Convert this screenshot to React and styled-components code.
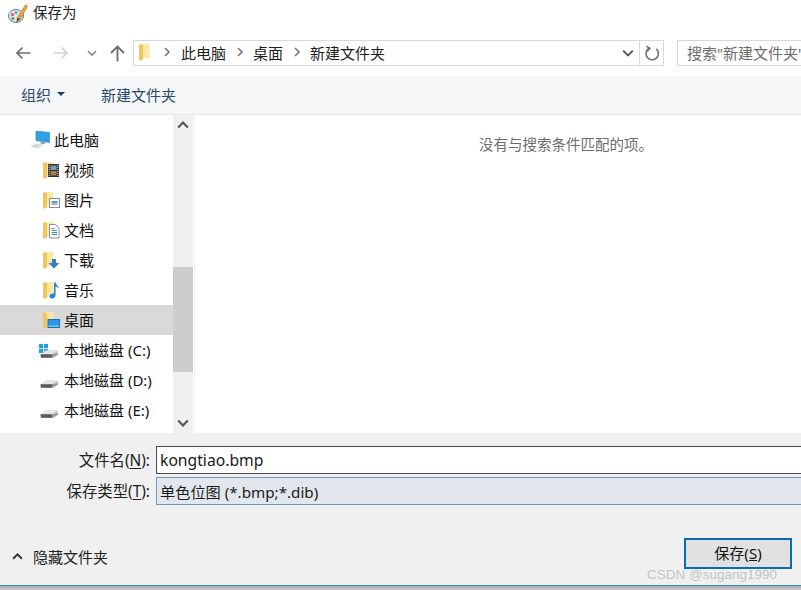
import React from "react";
import styled, { createGlobalStyle } from "styled-components";

const GlobalStyle = createGlobalStyle`
  html, body {
    margin: 0;
    padding: 0;
    background: #fff;
  }
  body {
    font-family: "Noto Sans", "Open Sans", "Noto Sans CJK SC", sans-serif;
  }
`;

const Chevron = ({ dir = "down", size = 10, color = "#555", width = 1.6 }) => {
  const points = {
    down: "1,3 5,7 9,3",
    up: "1,7 5,3 9,7",
    right: "3,1 7,5 3,9",
  };
  return (
    <svg width={size} height={size} viewBox="0 0 10 10">
      <polyline points={points[dir]} fill="none" stroke={color} strokeWidth={width} />
    </svg>
  );
};

const ArrowLeft = ({ color }) => (
  <svg width="16" height="14" viewBox="0 0 16 14">
    <path d="M15.5 7H2M7.5 1.5L2 7l5.5 5.5" fill="none" stroke={color} strokeWidth="1.7" />
  </svg>
);

const ArrowRight = ({ color }) => (
  <svg width="16" height="14" viewBox="0 0 16 14">
    <path d="M.5 7H14M8.5 1.5L14 7l-5.5 5.5" fill="none" stroke={color} strokeWidth="1.7" />
  </svg>
);

const ArrowUp = () => (
  <svg width="15" height="17" viewBox="0 0 15 17">
    <path d="M7.5 16.5V2M1 8l6.5-6.5L14 8" fill="none" stroke="#6b6b6b" strokeWidth="1.8" />
  </svg>
);

const RefreshIcon = () => (
  <svg width="16" height="17" viewBox="0 0 16 17">
    <path d="M5 3.2A6.2 6.2 0 1 0 11.5 3.4" fill="none" stroke="#6f6f6f" strokeWidth="1.6" transform="rotate(8 8 9)" />
    <path d="M2.4 1.2L5.8 3.4 3.2 6.4" fill="none" stroke="#6f6f6f" strokeWidth="1.5" />
  </svg>
);

const PaintIcon = () => (
  <svg width="20" height="20" viewBox="0 0 20 20">
    <ellipse cx="8" cy="12" rx="7.5" ry="6.5" fill="#dfe7ee" stroke="#5f7f9c" strokeWidth="1" />
    <circle cx="4.5" cy="10.5" r="1.5" fill="#d9534f" />
    <circle cx="8" cy="8.6" r="1.4" fill="#4b9bd6" />
    <circle cx="4.8" cy="14.4" r="1.5" fill="#5a9f4a" />
    <path d="M9 14L17.5 .8 19.6 2.2 12.5 15z" fill="#e8a93c" stroke="#a9701f" strokeWidth=".6" />
    <path d="M9 14l3.5 1-4 3.5z" fill="#6d4a20" />
  </svg>
);

const Folder = ({ children }) => (
  <svg width="18" height="18" viewBox="0 0 18 18">
    <path d="M3 1h8.5v14H3z" fill="#fde7a6" />
    <path d="M1 1.2l4 .8v15l-4 .6z" fill="#f3c460" />
    {children}
  </svg>
);

const folderBadges = {
  video: (
    <g>
      <rect x="6" y="3" width="11" height="13" fill="#333" />
      <rect x="8.5" y="4.5" width="6" height="4.5" fill="#7f9ab0" />
      <rect x="8.5" y="10" width="6" height="4.5" fill="#a8803f" />
      <path d="M7.2 4v11M15.8 4v11" stroke="#ddd" strokeWidth="1" strokeDasharray="1 1" />
    </g>
  ),
  picture: (
    <g>
      <rect x="7.5" y="7.5" width="10" height="9" fill="#fff" stroke="#848c94" />
      <rect x="9.5" y="10" width="6" height="2.5" fill="#5a93c4" />
      <rect x="9.5" y="13" width="6" height="1" fill="#9aa5ae" />
    </g>
  ),
  doc: (
    <g>
      <path d="M7.5 3.5h6l3.5 3.5v10h-9.5z" fill="#fff" stroke="#8b9299" />
      <path d="M9.5 7.5h3M9.5 9.5h5.5M9.5 11.5h5.5M9.5 13.5h5.5" stroke="#3f8fc4" strokeWidth="1" />
    </g>
  ),
  download: (
    <g>
      <path d="M10 8h4v4h3.5L12 17.5 6.5 12H10z" fill="#2f7fcc" />
    </g>
  ),
  music: (
    <g>
      <path d="M12 1.5h1.6c.3 3 3.4 3.6 3.4 6.5-1-1.6-2-2.2-3.4-2.4V14c0 2-1.8 3.4-3.7 3.4-1.5 0-2.4-.8-2.4-2 0-1.6 1.8-2.9 3.6-2.9.3 0 .6 0 .9.1z" fill="#1f86d6" />
    </g>
  ),
  desktop: (
    <g>
      <rect x="6" y="8.5" width="11.5" height="8" fill="#2b97ea" stroke="#1a6fb3" />
      <rect x="6.5" y="14.5" width="10.5" height="1.5" fill="#7fc3f5" />
    </g>
  ),
};

const ComputerIcon = () => (
  <svg width="20" height="18" viewBox="0 0 20 18">
    <path d="M6 0l13.5 1.5v10L6 9.5z" fill="#2f9fe6" stroke="#2481c0" strokeWidth=".6" />
    <path d="M10.5 10.5l4.5.6v2.2l-4.5-.6z" fill="#9aa3aa" />
    <path d="M0 15.5l6-3 8 1.5-6.5 3.5z" fill="#d5dade" />
  </svg>
);

const DriveIcon = ({ windows }) => (
  <svg width="20" height="18" viewBox="0 0 20 18">
    {windows && (
      <g fill="#16a3dc">
        <rect x="0" y="3" width="4" height="4" />
        <rect x="5" y="3" width="4" height="4" />
        <rect x="0" y="8" width="4" height="4" />
        <rect x="5" y="8" width="4" height="4" />
      </g>
    )}
    <path d="M1.5 13.5L7 9.5h11.5l.5 4-5 3.5H2z" fill="#c9c9c9" />
    <path d="M7 9.5h11l-5 3.7H1.8z" fill="#e6e6e6" />
    <path d="M1.5 13.2h11.7v3.6H2z" fill="#5c5c5c" />
    <path d="M13.2 13.2l5.8-1.2v1.8l-5.8 3z" fill="#9a9a9a" />
  </svg>
);

const Page = styled.div`
  width: 801px;
  height: 590px;
  display: flex;
  flex-direction: column;
  overflow: hidden;
  position: relative;
  background: #fff;
`;

const TitleBar = styled.div`
  height: 27px;
  box-sizing: border-box;
  display: flex;
  align-items: center;
  gap: 5px;
  padding-left: 8px;
  font-size: 14.5px;
  color: #222;
`;

const TitleText = styled.span`
  position: relative;
  top: -2px;
`;

const NavRow = styled.div`
  height: 26px;
  margin: 13px 0 10px;
  display: flex;
  align-items: center;
`;

const NavButton = styled.div`
  width: ${(p) => p.$w}px;
  margin-left: ${(p) => p.$ml || 0}px;
  flex-shrink: 0;
  display: flex;
  justify-content: center;
  align-items: center;
`;

const AddressBox = styled.div`
  width: 507px;
  height: 26px;
  flex-shrink: 0;
  box-sizing: border-box;
  margin-left: 8px;
  padding-left: 4px;
  padding-bottom: 2px;
  display: flex;
  align-items: center;
  border: 1px solid #d9d9d9;
  font-size: 15px;
  color: #1e1e1e;
`;

const Crumb = styled.span`
  margin-left: ${(p) => p.$ml}px;
`;

const CrumbArrow = styled.span`
  display: flex;
  margin-left: ${(p) => p.$ml}px;
`;

const AddressDrop = styled.div`
  margin-left: auto;
  width: 22px;
  height: 100%;
  display: flex;
  align-items: center;
  justify-content: center;
  position: relative;
  top: 1px;
`;

const RefreshBox = styled.div`
  width: 25px;
  height: 26px;
  flex-shrink: 0;
  box-sizing: border-box;
  display: flex;
  align-items: center;
  justify-content: center;
  border: 1px solid #d9d9d9;
  margin-left: -1px;
`;

const SearchBox = styled.div`
  width: 125px;
  height: 26px;
  flex-shrink: 0;
  box-sizing: border-box;
  margin-left: 13px;
  padding: 0 0 2px 9px;
  display: flex;
  align-items: center;
  white-space: nowrap;
  overflow: hidden;
  border: 1px solid #d9d9d9;
  border-right: none;
  font-size: 15px;
  color: #6d6d6d;
`;

const Toolbar = styled.div`
  height: 39px;
  box-sizing: border-box;
  flex-shrink: 0;
  display: flex;
  align-items: center;
  padding: 0 0 2px 21px;
  background: #f5f6f7;
  border-bottom: 1px solid #e3e5e8;
  font-size: 15px;
  color: #2a4a6a;
`;

const ToolButton = styled.div`
  display: flex;
  align-items: center;
  gap: 6px;
  margin-right: ${(p) => p.$mr || 0}px;
`;

const Caret = styled.span`
  width: 0;
  height: 0;
  border-left: 4px solid transparent;
  border-right: 4px solid transparent;
  border-top: 4px solid #1f3a5a;
`;

const Content = styled.div`
  height: 318px;
  flex-shrink: 0;
  display: flex;
`;

const Sidebar = styled.div`
  width: 173px;
  padding-top: 10px;
  box-sizing: border-box;
  overflow: hidden;
`;

const NavItem = styled.div`
  height: 30px;
  box-sizing: border-box;
  display: flex;
  align-items: center;
  padding-left: ${(p) => p.$indent}px;
  gap: ${(p) => p.$gap}px;
  font-size: 15px;
  color: #111;
  white-space: nowrap;
  background: ${(p) => (p.$selected ? "#d9d9d9" : "transparent")};

  span {
    position: relative;
    top: -1px;
  }
`;

const ScrollBar = styled.div`
  width: 20px;
  display: flex;
  flex-direction: column;
  background: #f0f0f0;
`;

const ScrollButton = styled.div`
  height: 20px;
  display: flex;
  align-items: center;
  justify-content: center;
  flex-shrink: 0;
  margin-top: ${(p) => (p.$end ? "auto" : "0")};
`;

const ScrollThumb = styled.div`
  height: 105px;
  margin-top: ${(p) => p.$top}px;
  background: #cdcdcd;
`;

const EmptyPane = styled.div`
  flex: 1;
  margin-left: 1px;
  border-left: 1px solid #f0f0f0;
  padding: 18px 0 0 284px;
  font-size: 14.5px;
  color: #6d6d6d;
  box-sizing: border-box;
  white-space: nowrap;
`;

const Footer = styled.div`
  height: 153px;
  flex-shrink: 0;
  box-sizing: border-box;
  padding-top: 13px;
  display: flex;
  flex-direction: column;
  background: #f0f0f0;
  border-bottom: 1px solid #3a8bbd;
`;

const FieldRow = styled.div`
  height: 28px;
  margin-bottom: 3px;
  display: flex;
  align-items: center;
`;

const FieldLabel = styled.label`
  width: 150px;
  text-align: right;
  padding-bottom: 2px;
  font-size: 15.4px;
  color: #222;
  white-space: nowrap;

  u {
    text-underline-offset: 2px;
  }
`;

const FieldBox = styled.div`
  flex: 1;
  height: 28px;
  box-sizing: border-box;
  margin-left: 6px;
  padding: 0 0 1px 3px;
  display: flex;
  align-items: center;
  font-size: ${(p) => (p.$combo ? 15.2 : 15.7)}px;
  color: #1a1a1a;
  background: ${(p) => (p.$combo ? "#e1e7ec" : "#fff")};
  border: 1px solid ${(p) => (p.$combo ? "#6f98b8" : "#4a4a4a")};
  border-right: none;
`;

const FooterActions = styled.div`
  flex: 1;
  display: flex;
  align-items: flex-start;
  justify-content: space-between;
  padding: 30px 9px 0 12px;
`;

const HideFolders = styled.div`
  margin-top: 8px;
  display: flex;
  align-items: center;
  gap: 10px;
  font-size: 15px;
  color: #222;
`;

const SaveButton = styled.button`
  width: 108px;
  height: 31px;
  box-sizing: border-box;
  padding: 0 0 2px;
  border: 2px solid #0a6cb5;
  background: #e1e1e1;
  font-family: inherit;
  font-size: 15px;
  color: #111;
`;

const WindowEdge = styled.div`
  flex: 1;
  background: linear-gradient(#a9acaf, #c9cbcd);
`;

const Watermark = styled.div`
  position: absolute;
  left: 647px;
  top: 567px;
  font-family: "Liberation Sans", sans-serif;
  font-size: 13.5px;
  color: rgba(150, 150, 150, 0.5);
  white-space: nowrap;
`;

const places = [
  { name: "视频", badge: "video" },
  { name: "图片", badge: "picture" },
  { name: "文档", badge: "doc" },
  { name: "下载", badge: "download" },
  { name: "音乐", badge: "music" },
  { name: "桌面", badge: "desktop", selected: true },
];

const drives = [
  { name: "本地磁盘 (C:)", windows: true },
  { name: "本地磁盘 (D:)" },
  { name: "本地磁盘 (E:)" },
];

export default function App() {
  return (
    <>
      <GlobalStyle />
      <Page>
        <TitleBar>
          <PaintIcon />
          <TitleText>保存为</TitleText>
        </TitleBar>

        <NavRow>
          <NavButton $w={16} $ml={15}>
            <ArrowLeft color="#6e6e6e" />
          </NavButton>
          <NavButton $w={16} $ml={22}>
            <ArrowRight color="#d2d2d2" />
          </NavButton>
          <NavButton $w={10} $ml={18}>
            <Chevron color="#8a8a8a" />
          </NavButton>
          <NavButton $w={15} $ml={13}>
            <ArrowUp />
          </NavButton>
          <AddressBox>
            <Folder />
            <CrumbArrow $ml={6}>
              <Chevron dir="right" color="#777" />
            </CrumbArrow>
            <Crumb $ml={9}>此电脑</Crumb>
            <CrumbArrow $ml={9}>
              <Chevron dir="right" color="#777" />
            </CrumbArrow>
            <Crumb $ml={8}>桌面</Crumb>
            <CrumbArrow $ml={9}>
              <Chevron dir="right" color="#777" />
            </CrumbArrow>
            <Crumb $ml={8}>新建文件夹</Crumb>
            <AddressDrop>
              <Chevron size={12} color="#555" />
            </AddressDrop>
          </AddressBox>
          <RefreshBox>
            <RefreshIcon />
          </RefreshBox>
          <SearchBox>搜索"新建文件夹"</SearchBox>
        </NavRow>

        <Toolbar>
          <ToolButton $mr={36}>
            组织
            <Caret />
          </ToolButton>
          <ToolButton>新建文件夹</ToolButton>
        </Toolbar>

        <Content>
          <Sidebar>
            <NavItem $indent={30} $gap={4}>
              <ComputerIcon />
              <span>此电脑</span>
            </NavItem>
            {places.map((place) => (
              <NavItem key={place.name} $indent={42} $gap={4} $selected={place.selected}>
                <Folder>{folderBadges[place.badge]}</Folder>
                <span>{place.name}</span>
              </NavItem>
            ))}
            {drives.map((drive) => (
              <NavItem key={drive.name} $indent={39} $gap={5}>
                <DriveIcon windows={drive.windows} />
                <span>{drive.name}</span>
              </NavItem>
            ))}
          </Sidebar>
          <ScrollBar>
            <ScrollButton>
              <Chevron dir="up" size={12} color="#555" width={1.8} />
            </ScrollButton>
            <ScrollThumb $top={132} />
            <ScrollButton $end>
              <Chevron size={12} color="#555" width={1.8} />
            </ScrollButton>
          </ScrollBar>
          <EmptyPane>没有与搜索条件匹配的项。</EmptyPane>
        </Content>

        <Footer>
          <FieldRow>
            <FieldLabel>
              文件名(<u>N</u>):
            </FieldLabel>
            <FieldBox>kongtiao.bmp</FieldBox>
          </FieldRow>
          <FieldRow>
            <FieldLabel>
              保存类型(<u>T</u>):
            </FieldLabel>
            <FieldBox $combo>单色位图 (*.bmp;*.dib)</FieldBox>
          </FieldRow>
          <FooterActions>
            <HideFolders>
              <Chevron dir="up" size={11} color="#333" width={1.8} />
              隐藏文件夹
            </HideFolders>
            <SaveButton>
              保存(<u>S</u>)
            </SaveButton>
          </FooterActions>
        </Footer>
        <WindowEdge />
        <Watermark>CSDN @sugang1990</Watermark>
      </Page>
    </>
  );
}
